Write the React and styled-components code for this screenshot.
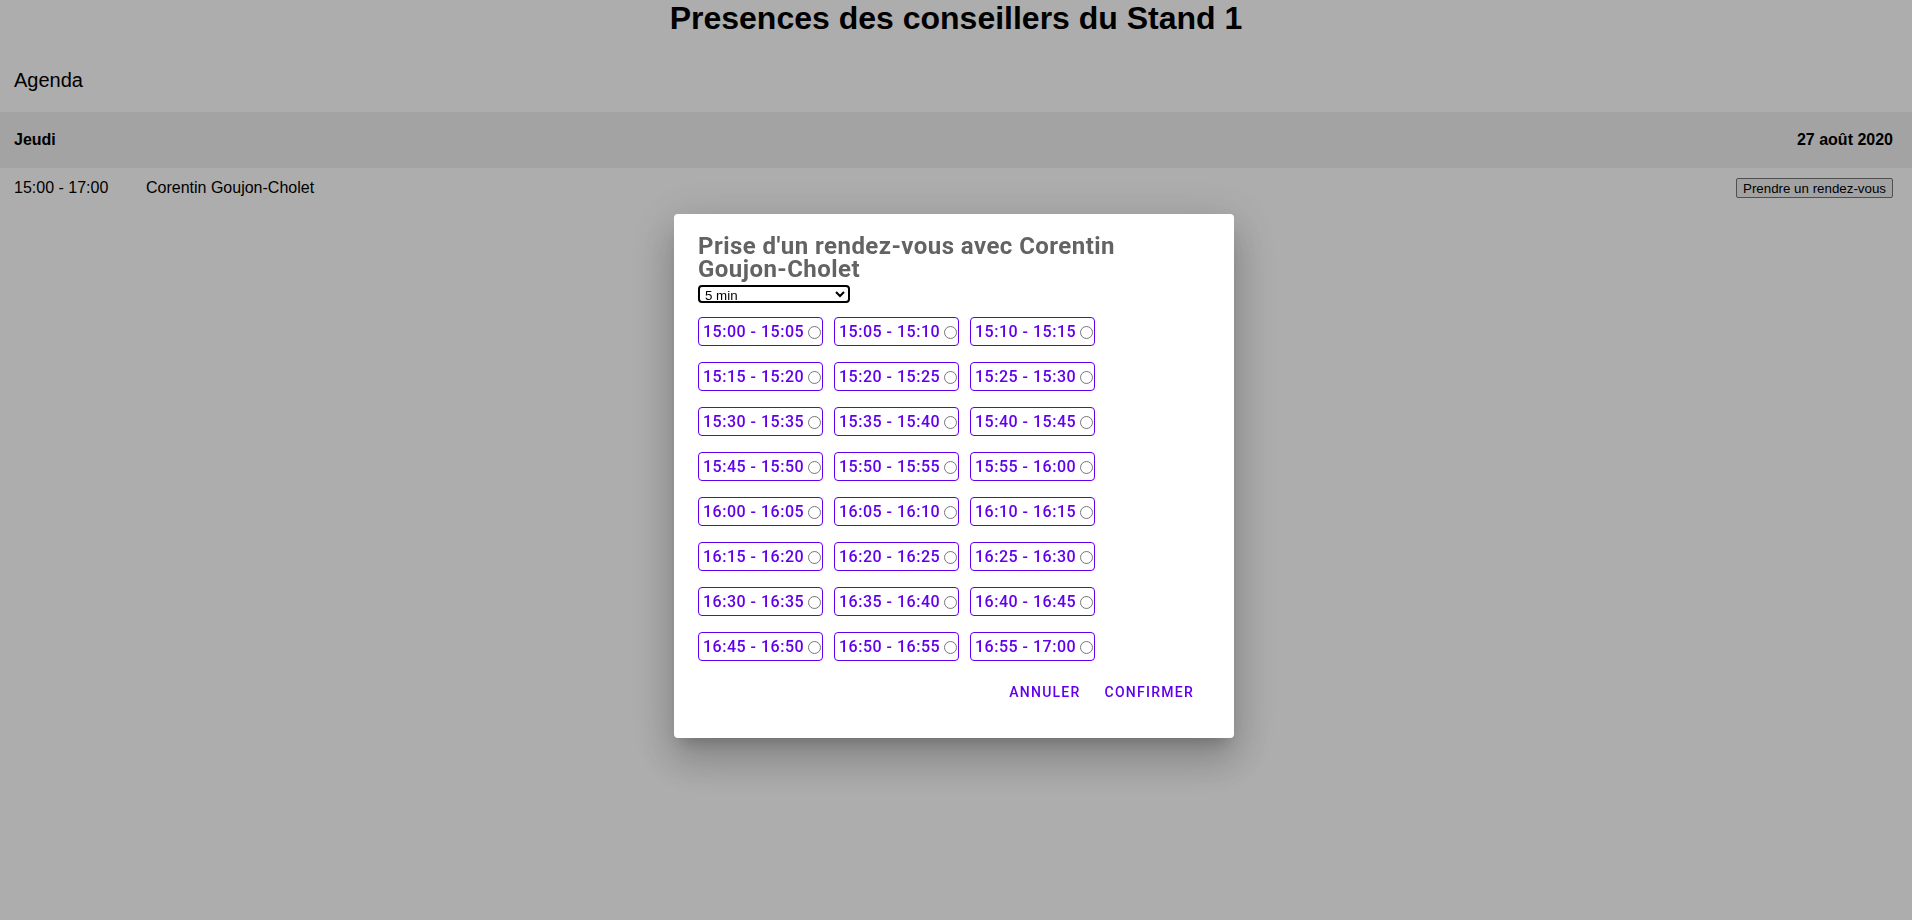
import React, { useState } from 'react';
import styled, { createGlobalStyle } from 'styled-components';

const GlobalStyle = createGlobalStyle`
  html, body {
    margin: 0;
    padding: 0;
    background: #ffffff;
    font-family: "Liberation Sans", Arial, sans-serif;
    color: #000;
  }
`;

const Page = styled.div`
  min-height: 920px;
`;

const PageTitle = styled.h1`
  margin: 0;
  font-size: 32px;
  line-height: 37px;
  font-weight: bold;
  text-align: center;
`;

const SectionTitle = styled.div`
  margin: 32px 14px 20px;
  font-size: 20px;
  line-height: 23px;
`;

const DayHeader = styled.div`
  display: flex;
  align-items: center;
  justify-content: space-between;
  height: 56px;
  padding: 0 19px 0 14px;
  background: #f0f0f0;
  font-size: 16px;
  font-weight: bold;
`;

const AgendaRow = styled.div`
  display: flex;
  align-items: center;
  height: 40px;
  padding: 0 19px 0 14px;
  font-size: 16px;
`;

const Hours = styled.span`
  width: 132px;
  flex: none;
`;

const Advisor = styled.span`
  flex: 1;
`;

const BookButton = styled.button`
  font-family: "Liberation Sans", Arial, sans-serif;
  font-size: 13.333px;
  padding: 1px 6px;
  height: 20px;
  border: 1px solid #767676;
  border-radius: 2px;
  background: #efefef;
  color: #000;
`;

const Scrim = styled.div`
  position: fixed;
  inset: 0;
  background: rgba(0, 0, 0, 0.32);
`;

const DialogLayer = styled.div`
  position: fixed;
  inset: 0;
  display: flex;
  justify-content: center;
  align-items: flex-start;
  padding: 214px 4px 0 0;
  box-sizing: border-box;
`;

const Dialog = styled.div`
  width: 560px;
  box-sizing: border-box;
  padding: 21px 0 28px;
  background: #fff;
  border-radius: 4px;
  box-shadow: 0 11px 15px -7px rgba(0, 0, 0, 0.2),
    0 24px 38px 3px rgba(0, 0, 0, 0.14),
    0 9px 46px 8px rgba(0, 0, 0, 0.12);
  font-family: Roboto, "Liberation Sans", sans-serif;
`;

const DialogTitle = styled.h2`
  margin: 0;
  padding: 0 24px;
  max-width: 440px;
  font-size: 24px;
  line-height: 23px;
  font-weight: 700;
  letter-spacing: 0.45px;
  color: #636363;
`;

const DurationSelect = styled.select`
  display: block;
  margin: 4px 0 0 24px;
  width: 152px;
  height: 18px;
  box-sizing: border-box;
  padding: 0 0 0 1px;
  border: 2px solid #000;
  border-radius: 4px;
  background: #fff;
  font-family: "Liberation Sans", Arial, sans-serif;
  font-size: 13.333px;
  color: #000;
`;

const SlotGrid = styled.div`
  display: grid;
  grid-template-columns: repeat(3, 125px);
  column-gap: 11px;
  row-gap: 16px;
  margin: 14px 24px 0;
`;

const Slot = styled.label`
  display: flex;
  align-items: center;
  justify-content: space-between;
  height: 29px;
  box-sizing: border-box;
  padding: 0 3px 0 4px;
  border: 1px solid #6200ee;
  border-radius: 4px;
  color: #6200ee;
  font-size: 16px;
  font-weight: 500;
  letter-spacing: 0.5px;
  white-space: nowrap;
  cursor: pointer;

  input {
    flex: none;
    width: 13px;
    height: 13px;
    margin: 1px 0 0 4px;
  }
`;

const Actions = styled.div`
  display: flex;
  justify-content: flex-end;
  gap: 8px;
  margin-top: 13px;
  padding-right: 32px;
`;

const TextButton = styled.button`
  height: 36px;
  min-width: 64px;
  padding: 0 8px;
  border: none;
  background: none;
  color: #6200ee;
  font-family: Roboto, sans-serif;
  font-size: 14px;
  font-weight: 500;
  letter-spacing: 1.25px;
  text-transform: uppercase;
  cursor: pointer;
`;

const pad = (n) => String(n).padStart(2, '0');
const fmt = (m) => `${pad(Math.floor(m / 60))}:${pad(m % 60)}`;

const slots = [];
for (let m = 15 * 60; m < 17 * 60; m += 5) {
  slots.push(`${fmt(m)} - ${fmt(m + 5)}`);
}

const App = () => {
  const [picked, setPicked] = useState(null);

  return (
    <>
      <GlobalStyle />
      <Page>
        <PageTitle>Presences des conseillers du Stand 1</PageTitle>
        <SectionTitle>Agenda</SectionTitle>
        <DayHeader>
          <span>Jeudi</span>
          <span>27 août 2020</span>
        </DayHeader>
        <AgendaRow>
          <Hours>15:00 - 17:00</Hours>
          <Advisor>Corentin Goujon-Cholet</Advisor>
          <BookButton>Prendre un rendez-vous</BookButton>
        </AgendaRow>
      </Page>

      <Scrim />
      <DialogLayer>
        <Dialog>
          <DialogTitle>Prise d'un rendez-vous avec Corentin Goujon-Cholet</DialogTitle>
          <DurationSelect defaultValue="5">
            <option value="5">5 min</option>
            <option value="10">10 min</option>
            <option value="15">15 min</option>
            <option value="30">30 min</option>
          </DurationSelect>
          <SlotGrid>
            {slots.map((s) => (
              <Slot key={s}>
                {s}
                <input
                  type="radio"
                  name="slot"
                  checked={picked === s}
                  onChange={() => setPicked(s)}
                />
              </Slot>
            ))}
          </SlotGrid>
          <Actions>
            <TextButton>Annuler</TextButton>
            <TextButton>Confirmer</TextButton>
          </Actions>
        </Dialog>
      </DialogLayer>
    </>
  );
};

export default App;
